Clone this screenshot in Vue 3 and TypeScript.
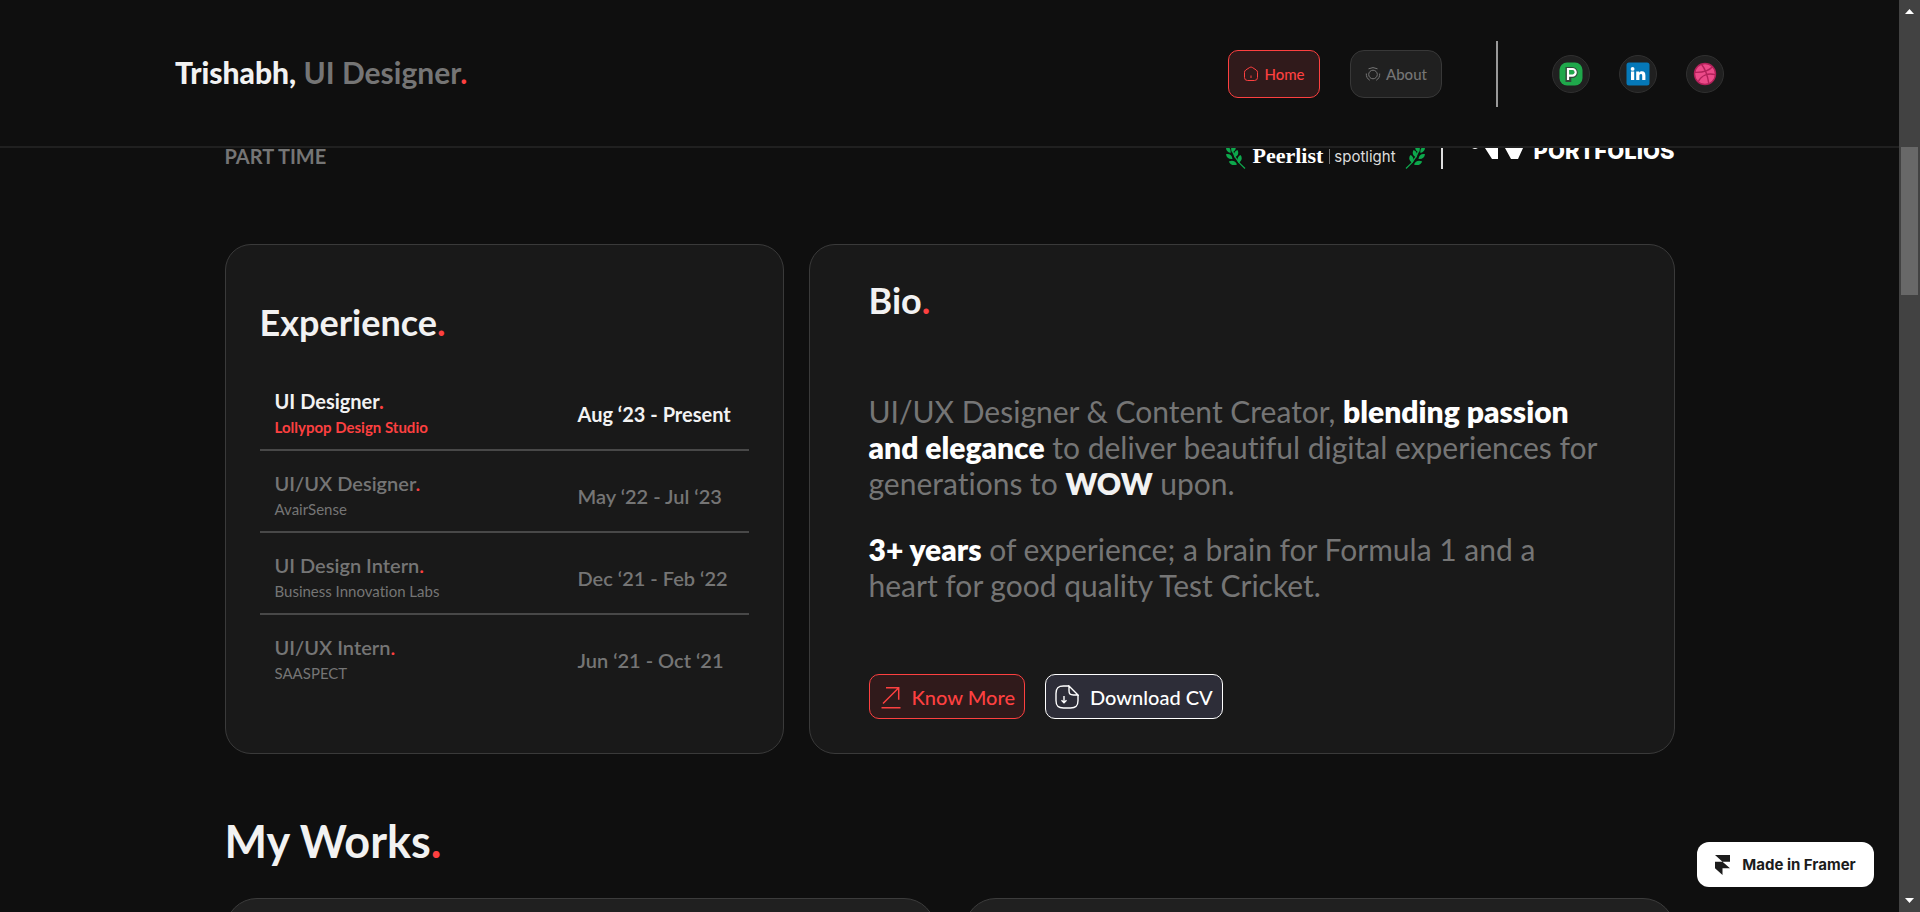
<script setup lang="ts">
interface Job {
  role: string
  company: string
  dates: string
  current?: boolean
}

const jobs: Job[] = [
  { role: 'UI Designer', company: 'Lollypop Design Studio', dates: 'Aug ‘23 - Present', current: true },
  { role: 'UI/UX Designer', company: 'AvairSense', dates: 'May ‘22 - Jul ‘23' },
  { role: 'UI Design Intern', company: 'Business Innovation Labs', dates: 'Dec ‘21 - Feb ‘22' },
  { role: 'UI/UX Intern', company: 'SAASPECT', dates: 'Jun ‘21 - Oct ‘21' },
]
</script>

<template>
  <div class="page">
    <header class="topbar">
      <a class="brand" href="#"><b>Trishabh,</b> UI Designer<i class="dot">.</i></a>
      <div class="tools">
        <nav class="nav">
          <a class="pill active" href="#home">
            <svg width="16" height="16" viewBox="0 0 16 16" fill="none" stroke="currentColor">
              <path d="M1.5 6.3c0-1 .4-1.7 1.3-2.3L6.300 1.700c1-.8 2.400-.8 3.400 0L13.200 4c.9.6 1.300 1.300 1.300 2.300v5.200a3 3 0 0 1-3 3h-7a3 3 0 0 1-3-3z" />
              <path d="M8 9.500v2.500" />
            </svg>
            Home
          </a>
          <a class="pill" href="#about">
            <svg width="16" height="16" viewBox="0 0 16 16" fill="none" stroke="currentColor">
              <circle cx="8" cy="8.500" r="4.300" />
              <path d="M3.500 2.800Q8 .4 12.500 2.800M1.300 7.500Q1 12 4.800 14.300M14.700 7.500Q15 12 11.200 14.300" />
            </svg>
            About
          </a>
        </nav>
        <span class="rule"></span>
        <div class="socials">
          <a class="social" href="#peerlist" aria-label="Peerlist">
            <svg width="24" height="24" viewBox="0 0 24 24">
              <rect x=".5" y=".5" width="23" height="23" rx="7.500" fill="#1fa84b" />
              <path d="M8 18.500v-12h5.200a4 4 0 0 1 0 8h-2.400v4z" fill="none" stroke="#31473a" stroke-width="3" />
              <path d="M9 18V7h4.400a3.300 3.300 0 0 1 0 6.600H9" fill="none" stroke="#fff" stroke-width="2.200" />
            </svg>
          </a>
          <a class="social" href="#linkedin" aria-label="LinkedIn">
            <svg width="24" height="24" viewBox="0 0 24 24">
              <rect x=".5" y=".5" width="23" height="23" rx="2.500" fill="#0578b8" />
              <circle cx="6.600" cy="6.900" r="1.900" fill="#fff" />
              <path d="M5 9.500h3.200V18H5zM10.200 9.500h3v1.200c.6-.9 1.600-1.400 2.800-1.400 2.300 0 3.400 1.500 3.400 4V18h-3.200v-4.300c0-1.200-.4-1.800-1.300-1.800-1 0-1.500.7-1.500 1.900V18h-3.200z" fill="#fff" />
            </svg>
          </a>
          <a class="social" href="#dribbble" aria-label="Dribbble">
            <svg width="24" height="24" viewBox="0 0 24 24" fill="none" stroke="#b2215a" stroke-width="1.400">
              <circle cx="12" cy="12" r="10.500" fill="#ec4a89" />
              <path d="M8.500 2.300c3.500 4.500 6 11 7.200 18.600M1.700 10.300c7.500.3 14-1 18-5.800M5.200 19.700C8 14 14 10.600 22.200 12.600" />
            </svg>
          </a>
        </div>
      </div>
    </header>

    <main class="content">
      <section class="strip">
        <span class="availability">PART TIME</span>
        <div class="features">
          <div class="peerlist">
            <svg v-for="side in ['left', 'right']" :key="side" class="laurel" :class="side" width="20" height="28" viewBox="0 0 20 28" fill="#0da84c">
              <path d="M5 2c1 10 5 17 14 24.500" fill="none" stroke="#0da84c" stroke-width="1.400" />
              <path d="M4.500 11C1 10-.5 7.500.2 4.500c3.500.5 5 3 4.300 6.500zM6.500 17C3 17.500.3 15.500 0 12.300c3.500-.8 6 1 6.500 4.700zM11 22.500c-3.500 1.500-7 .2-8.200-3 3.500-1.800 7-.5 8.200 3zM6 10.500C4.500 7 6 4 9 3c1.700 3 .6 6-3 7.500zM8.500 15.500C7 12 8.500 9 11.500 8c1.700 3 .6 6-3 7.500zM12.500 21c-2-3-1-6.500 2-8 2.200 2.700 1.500 6-2 8z" />
            </svg>
            <b>Peerlist</b>
            <span class="thin"></span>
            <span class="spotlight">spotlight</span>
          </div>
          <span class="split"></span>
          <div class="portfolios">
            <svg width="60" height="28" viewBox="0 0 60 28" fill="#fff">
              <circle cx="7" cy="13" r="5" />
              <path d="M10 6h20v22h-6zM31 6h29L50 28h-7z" />
            </svg>
            <b>PORTFOLIOS</b>
          </div>
        </div>
      </section>

      <section class="cards">
        <article class="card experience">
          <h2>Experience<i class="dot">.</i></h2>
          <table>
            <tbody>
              <tr v-for="job in jobs" :key="job.role" :class="{ current: job.current }">
                <th scope="row">
                  <span class="role">{{ job.role }}<i class="dot">.</i></span>
                  <span class="company">{{ job.company }}</span>
                </th>
                <td>{{ job.dates }}</td>
              </tr>
            </tbody>
          </table>
        </article>

        <article class="card bio">
          <h2>Bio<i class="dot">.</i></h2>
          <div class="story">
            <p>
              UI/UX Designer &amp; Content Creator, <b>blending passion<br />and elegance</b> to deliver beautiful
              digital experiences for<br />generations to <b class="soft">WOW</b> upon.
            </p>
            <p><b>3+ years</b> of experience; a brain for Formula 1 and a<br />heart for good quality Test Cricket.</p>
          </div>
          <div class="actions">
            <button class="btn more" type="button">
              <svg width="24" height="24" viewBox="0 0 24 24" fill="none" stroke="currentColor" stroke-width="1.500">
                <path d="M4 18.500 19.500 3M7 2.700h12.700v12M2.500 22.700h19" />
              </svg>
              Know More
            </button>
            <button class="btn download" type="button">
              <svg width="24" height="24" viewBox="0 0 24 24" fill="none" stroke="currentColor" stroke-width="1.400">
                <path d="M14 1H8.500C3 1 1 3 1 8.500v7C1 21 3 23 8.500 23h7c5.500 0 7.500-2 7.500-7.500V10M14 1l9 9h-4.500C15 10 14 9 14 5.500zM9 11v6.500M6.500 15.300 9 17.800l2.500-2.500" />
              </svg>
              Download CV
            </button>
          </div>
        </article>
      </section>

      <section class="works">
        <h1>My Works<i class="dot">.</i></h1>
        <div class="work-grid">
          <div class="work"></div>
          <div class="work"></div>
        </div>
      </section>
    </main>

    <a class="framer" href="#framer">
      <svg width="15" height="20" viewBox="0 0 15 20" fill="#1c1c1c">
        <path d="M0 0h15v6.700H7.500zM0 6.700h7.500l7.500 6.600H7.500V20L0 13.300z" />
      </svg>
      Made in Framer
    </a>

    <div class="scrollbar" aria-hidden="true">
      <svg width="9" height="5" viewBox="0 0 9 5" fill="#fff"><path d="M4.500 0 9 5H0z" /></svg>
      <span class="thumb"></span>
      <svg width="9" height="5" viewBox="0 0 9 5" fill="#fff"><path d="M0 0h9L4.500 5z" /></svg>
    </div>
  </div>
</template>

<style>
html,
body {
  margin: 0;
  background: #0f0f0f;
}
</style>

<style scoped>
.page {
  height: 100vh;
  overflow: hidden;
  box-sizing: border-box;
  padding-right: 21px;
  background: #0f0f0f;
  color: #757575;
  font-family: Lato, 'Open Sans', sans-serif;
  font-variant-ligatures: none;
}
a {
  color: inherit;
  text-decoration: none;
}
svg {
  flex: none;
  display: block;
}
.dot {
  color: #fd4040;
  font-style: normal;
}
h1,
h2,
p {
  margin: 0;
}

.topbar {
  position: fixed;
  top: 0;
  left: 0;
  right: 21px;
  z-index: 2;
  height: 148px;
  box-sizing: border-box;
  padding: 0 175px;
  display: flex;
  align-items: center;
  justify-content: space-between;
  background: #0f0f0f;
  box-shadow: inset 0 -2px #202020;
}
.brand {
  padding-bottom: 4px;
  font-size: 30px;
  font-weight: 700;
}
.brand b {
  color: #f2f2f2;
  font-weight: 900;
}
.tools {
  display: flex;
  align-items: center;
}
.nav {
  display: flex;
  gap: 30px;
}
.pill {
  width: 92px;
  height: 48px;
  box-sizing: border-box;
  display: flex;
  align-items: center;
  justify-content: center;
  gap: 5px;
  border: 1px solid #383838;
  border-radius: 14px;
  background: #202020;
  color: #757575;
  font-size: 15px;
  font-weight: 500;
}
.pill.active {
  border-color: #fd4040;
  border-radius: 10px;
  background: #301a1b;
  color: #fd4040;
}
.rule {
  width: 2px;
  height: 66px;
  margin: 0 54px;
  background: #999;
}
.socials {
  display: flex;
  gap: 29px;
}
.social {
  width: 38px;
  height: 38px;
  box-sizing: border-box;
  display: grid;
  place-items: center;
  border: 1px solid #303030;
  border-radius: 50%;
  background: #202020;
}

.content {
  max-width: 1450px;
  margin: 0 auto;
  padding: 132px 50px 0;
}
.strip {
  height: 48px;
  display: flex;
  align-items: center;
  justify-content: space-between;
}
.availability {
  font-size: 20px;
  font-weight: 700;
}
.features,
.peerlist,
.portfolios {
  display: flex;
  align-items: center;
  color: #fff;
}
.features {
  gap: 16px;
}
.laurel.right {
  order: 1;
  transform: scaleX(-1);
}
.peerlist b {
  margin-left: 6px;
  font-family: 'Liberation Serif', serif;
  font-size: 22px;
}
.thin {
  width: 1px;
  height: 15px;
  margin: 0 4px 0 6px;
  background: #777;
}
.spotlight {
  margin-right: 9px;
  font-family: Inter, sans-serif;
  font-size: 15px;
  color: #ddd;
}
.split {
  width: 2px;
  height: 26px;
  background: #ddd;
}
.portfolios {
  gap: 6px;
  margin-left: 9px;
  padding-bottom: 22px;
  align-items: flex-end;
}
.portfolios b {
  font-family: Inter, sans-serif;
  font-size: 22px;
  font-weight: 800;
  line-height: 16px;
}

.cards {
  margin-top: 64px;
  display: grid;
  grid-template-columns: 559fr 866fr;
  gap: 25px;
}
.card {
  box-sizing: border-box;
  min-height: 510px;
  border: 1px solid #3a3a3a;
  border-radius: 26px;
  background: #191919;
}
h2 {
  color: #f2f2f2;
  font-size: 36px;
  line-height: 44px;
  font-weight: 700;
}
.experience {
  padding: 55px 34px 0;
}
table {
  width: 100%;
  margin-top: 25px;
  border-collapse: collapse;
}
th,
td {
  height: 70px;
  padding: 10px 0 0 15px;
  text-align: left;
  font-size: 20px;
  font-weight: 600;
}
td {
  width: 171px;
  padding-left: 0;
}
tr:not(:last-child) > * {
  border-bottom: 2px solid #484848;
}
.role,
.company {
  display: block;
  line-height: 26px;
}
.company {
  font-size: 15px;
  font-weight: 400;
}
.current th,
.current td {
  color: #f2f2f2;
  font-weight: 700;
}
.current .company {
  color: #fd4040;
  font-weight: 700;
}
.bio {
  padding: 33px 59px 34px;
  display: flex;
  flex-direction: column;
}
.story {
  margin-top: 71px;
  display: grid;
  gap: 30px;
  font-size: 30px;
  line-height: 36px;
  white-space: nowrap;
}
.story b {
  color: #fff;
  font-weight: 800;
}
.story .soft {
  color: #f2f2f2;
}
.actions {
  margin-top: auto;
  display: flex;
  gap: 20px;
}
.btn {
  height: 45px;
  padding: 0 9px;
  display: flex;
  align-items: center;
  gap: 11px;
  border: 1px solid;
  border-radius: 10px;
  font-family: inherit;
  font-size: 20px;
  font-weight: 500;
}
.more {
  gap: 9px;
  background: #301a1b;
  color: #fd4040;
}
.download {
  background: #2d2d38;
  color: #fff;
}

.works {
  margin-top: 59px;
}
h1 {
  color: #f2f2f2;
  font-size: 45px;
  line-height: 56px;
  font-weight: 700;
}
.work-grid {
  margin-top: 29px;
  display: grid;
  grid-template-columns: 1fr 1fr;
  gap: 28px;
}
.work {
  height: 400px;
  box-sizing: border-box;
  border: 1px solid #3c3c3c;
  border-radius: 32px;
  background: #202020;
}

.framer {
  position: fixed;
  right: 46px;
  bottom: 25px;
  width: 177px;
  height: 45px;
  box-sizing: border-box;
  display: flex;
  align-items: center;
  justify-content: center;
  gap: 12px;
  border-radius: 12px;
  background: #fff;
  color: #1c1c1c;
  font-family: Inter, sans-serif;
  font-size: 15px;
  font-weight: 700;
}
.scrollbar {
  position: fixed;
  top: 0;
  right: 0;
  bottom: 0;
  width: 21px;
  box-sizing: border-box;
  padding: 9px 0;
  display: flex;
  flex-direction: column;
  align-items: center;
  background: #424242;
}
.thumb {
  width: 17px;
  height: 148px;
  margin: 133px 0 auto;
  background: #686868;
}
</style>
